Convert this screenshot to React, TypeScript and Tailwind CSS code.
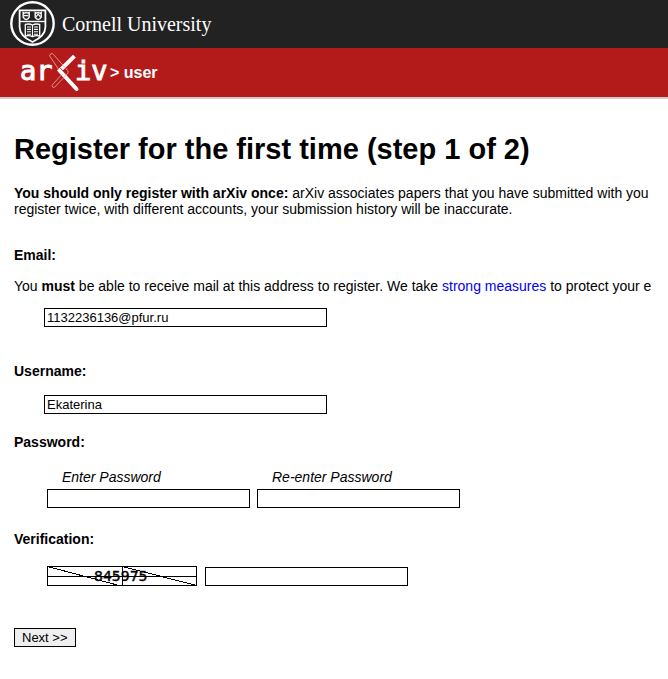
import { useState } from "react";
import type { ReactNode } from "react";

function CornellSeal() {
  return (
    <svg className="h-[46px] w-[46px]" viewBox="0 0 46 46" fill="none" stroke="#fff" aria-label="Cornell seal">
      <circle cx="22.5" cy="22.5" r="21.2" strokeWidth="2.4" />
      <path d="M9.6 9.4H35.4V26C35.4 33 30 37.5 22.5 41C15 37.5 9.6 33 9.6 26Z" strokeWidth="1.8" />
      <path d="M10 20.5H35" strokeWidth="1.4" />
      <path d="M13.2 11.5q1.6 1 3 0q1.5 1 3 0v4.6q-1 2-3 2.6q-2-.6-3-2.6z" strokeWidth="1.4" />
      <path d="M14 14.6h4.4" strokeWidth="1.4" />
      <path d="M25.2 11.5q1.6 1 3 0q1.5 1 3 0v4.6q-1 2-3 2.6q-2-.6-3-2.6z" strokeWidth="1.4" />
      <path d="M26 15.8l2.2-2.6 2.2 2.6" strokeWidth="1.2" />
      <path d="M15.3 23.4q4-1 7.2.6q3.2-1.6 7.2-.6V35q-4-1-7.2.6q-3.2-1.6-7.2-.6z" strokeWidth="1.3" />
      <path d="M22.5 24V35.6M17 26h4M17 28.4h4M17 30.8h4M17 33.2h4M24 26h4M24 28.4h4M24 30.8h4M24 33.2h4" strokeWidth="1.1" />
    </svg>
  );
}

function ArxivLogo() {
  return (
    <svg className="h-10 w-[88px]" viewBox="0 0 88 40" aria-label="arXiv">
      <g
        fill="#fff"
        stroke="#fff"
        strokeWidth="1"
        fontFamily="'DejaVu Sans Mono', monospace"
        fontSize="27"
      >
        <text x="0" y="27">ar</text>
        <text x="55" y="27">iv</text>
      </g>
      <path d="M40 17.5L53 4.5" stroke="#fff" strokeWidth="4" strokeLinecap="square" />
      <path d="M38.5 17L57 37" stroke="#b31b1b" strokeWidth="6" />
      <path d="M39.5 17.5L56.5 36" stroke="#fff" strokeWidth="4" strokeLinecap="round" />
      <path
        d="M30.6.8q1.5-.8 2.8.6L47.6 17.4q1.4 1.8-.2 3.4L34.8 34q-1.4 1-2.4 0q-.8-1.2.2-2.4L42 21.2M39 17L30 3.4q-.8-1.6.6-2.6"
        fill="none"
        stroke="#e7a9a9"
        strokeWidth="0.8"
      />
    </svg>
  );
}

function Captcha() {
  return (
    <svg className="h-5 w-[150px]" viewBox="0 0 150 20" role="img" aria-label="Verification code">
      <g fill="none" stroke="#000" shapeRendering="crispEdges">
        <rect x="0.5" y="0.5" width="149" height="19" />
        <path d="M0 10.5H150M75.5 0V20M0.5 0.5L74 20M75.5 0.5L149.5 19.5" />
      </g>
      <text x="47" y="15" fontFamily="'DejaVu Sans', sans-serif" fontSize="14" stroke="#000" strokeWidth="0.4">
        845975
      </text>
    </svg>
  );
}

function Heading({ htmlFor, children }: { htmlFor: string; children: ReactNode }) {
  return (
    <h2 className="font-bold">
      <label htmlFor={htmlFor}>{children}</label>
    </h2>
  );
}

const field = "h-[19px] border border-black bg-white px-0.5 text-[13px] leading-4 outline-none";

export default function App() {
  const [email, setEmail] = useState("1132236136@pfur.ru");
  const [username, setUsername] = useState("Ekaterina");

  return (
    <div className="overflow-hidden bg-white font-['Liberation_Sans',Arial,sans-serif] text-[14px] leading-4 text-black">
      <header>
        <div className="flex h-12 items-center gap-1.5 bg-[#222] px-2.5 text-white">
          <CornellSeal />
          <span className="font-['Liberation_Serif',serif] text-[20px] leading-6">Cornell University</span>
        </div>
        <div className="flex h-[51px] items-center gap-0.5 border-b-2 border-[#ccc] bg-[#b31b1b] px-5 text-white">
          <ArxivLogo />
          <span className="text-[16px] font-bold">&gt; user</span>
        </div>
      </header>

      <main className="px-3.5 pt-8 pb-8 whitespace-nowrap">
        <h1 className="text-[29px] leading-9 font-bold">Register for the first time (step 1 of 2)</h1>
        <p className="mt-[18px]">
          <b>You should only register with arXiv once:</b> arXiv associates papers that you have submitted with you
          <br />
          register twice, with different accounts, your submission history will be inaccurate.
        </p>

        <form onSubmit={(e) => e.preventDefault()}>
          <section className="mt-[30px]">
            <Heading htmlFor="email">Email:</Heading>
            <p className="mt-[15px]">
              You <b>must</b> be able to receive mail at this address to register. We take{" "}
              <a href="#measures" className="text-[#00e]">strong measures</a> to protect your e
            </p>
            <div className="mt-3.5 flex pl-[30px]">
              <input id="email" type="text" className={`${field} w-[283px]`} value={email} onChange={(e) => setEmail(e.target.value)} />
            </div>
          </section>

          <section className="mt-9">
            <Heading htmlFor="username">Username:</Heading>
            <div className="mt-4 flex pl-[30px]">
              <input id="username" type="text" className={`${field} w-[283px]`} value={username} onChange={(e) => setUsername(e.target.value)} />
            </div>
          </section>

          <section className="mt-5">
            <Heading htmlFor="password">Password:</Heading>
            <div className="mt-[19px] flex gap-[7px] pl-[33px]">
              <div className="flex flex-col gap-1">
                <label htmlFor="password" className="pl-[15px] italic">Enter Password</label>
                <input id="password" type="password" className={`${field} w-[203px]`} />
              </div>
              <div className="flex flex-col gap-1">
                <label htmlFor="password2" className="pl-[15px] italic">Re-enter Password</label>
                <input id="password2" type="password" className={`${field} w-[203px]`} />
              </div>
            </div>
          </section>

          <section className="mt-[23px]">
            <Heading htmlFor="code">Verification:</Heading>
            <div className="mt-[19px] flex items-end gap-2 pl-[33px]">
              <Captcha />
              <input id="code" type="text" className={`${field} w-[203px]`} />
            </div>
          </section>

          <button type="submit" className="mt-[42px] block h-[19px] border border-black bg-[#efefef] px-[7px] text-[13px] leading-4">
            Next &gt;&gt;
          </button>
        </form>
      </main>
    </div>
  );
}
